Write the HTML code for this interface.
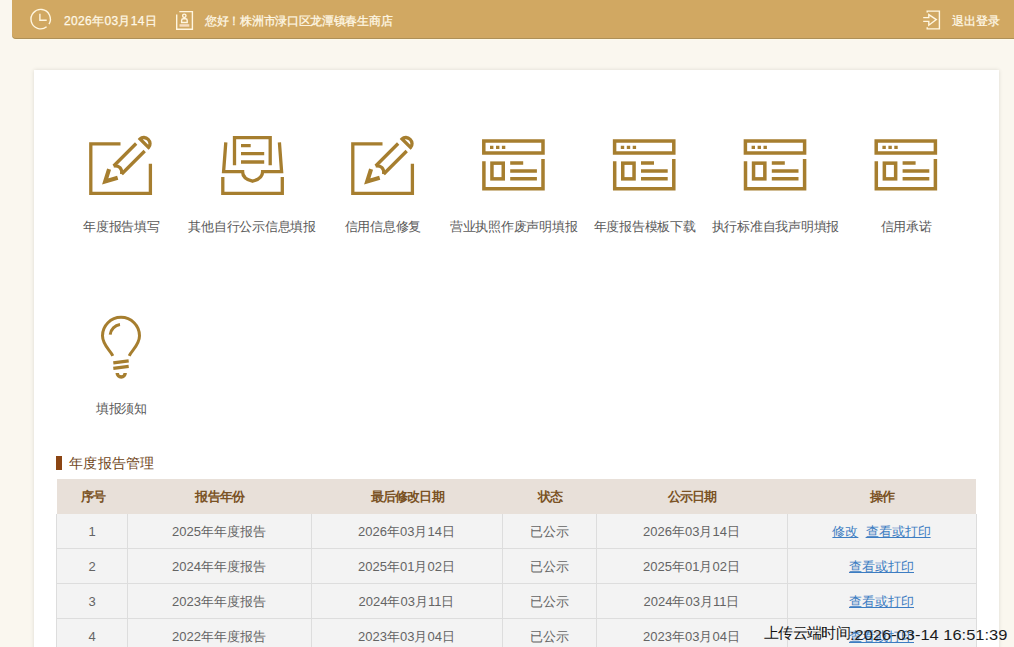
<!DOCTYPE html>
<html><head><meta charset="utf-8">
<style>
*{margin:0;padding:0;box-sizing:border-box}
html,body{width:1014px;height:647px;overflow:hidden;background:#faf7ef;font-family:"Liberation Sans",sans-serif;}
#hdr{position:absolute;left:12px;top:0;width:1002px;height:39px;background:#d1a862;border-radius:0 0 0 4px;box-shadow:inset 0 -1px 0 rgba(110,100,70,0.35),0 1px 0 #fffbea;}
.ht{position:absolute;color:#fff8e6;-webkit-text-stroke:0.25px #fff8e6;font-size:12px;line-height:14px;white-space:nowrap}
#panel{position:absolute;left:34px;top:70px;width:965px;height:600px;background:#fff;box-shadow:0 0 4px rgba(0,0,0,0.12);}
.lbl{position:absolute;color:#595959;font-size:13px;letter-spacing:-0.25px;line-height:16px;white-space:nowrap;text-align:center;width:160px}
#sect{position:absolute;left:56px;top:456px;width:6px;height:14px;background:#8b4513}
#secttxt{position:absolute;left:69px;letter-spacing:0.3px;top:455px;font-size:14px;line-height:17px;color:#6f4621;white-space:nowrap}
#thead{position:absolute;left:57px;top:479px;width:919px;height:35px;background:#e8e0d9}
.th{position:absolute;top:479px;height:35px;line-height:36px;color:#7a5224;font-weight:bold;font-size:13px;letter-spacing:-0.8px;padding-left:1.5px;text-align:center;white-space:nowrap}
#tbody{position:absolute;left:56px;top:514px;width:921px;height:140px;background:#f3f3f3}
.vl{position:absolute;top:514px;width:1px;height:140px;background:#dddddd}
.hl{position:absolute;left:56px;width:921px;height:1px;background:#dddddd}
.td{position:absolute;height:35px;line-height:35px;color:#646464;font-size:13px;text-align:center;white-space:nowrap}
.td a{color:#3d7dc2;text-decoration:underline}
#stamp1{position:absolute;left:764px;top:623px;font-size:15px;letter-spacing:-0.7px;line-height:20px;color:#111;white-space:nowrap}
#stamp2{position:absolute;left:850px;top:625px;font-size:14px;line-height:20px;color:#1c1c1c;white-space:nowrap;transform:scaleX(1.175);transform-origin:0 0}
</style></head><body>
<div id="hdr"></div>
<div class="ht" style="left:64px;top:14px;font-size:12px;letter-spacing:0.35px">2026年03月14日</div>
<div class="ht" style="left:205px;top:14px;letter-spacing:-0.3px">您好！株洲市渌口区龙潭镇春生商店</div>
<div class="ht" style="left:952px;top:14px">退出登录</div>
<div id="panel"></div>
<div class="lbl" style="left:41.3px;top:219px">年度报告填写</div>
<div class="lbl" style="left:172.1px;top:219px">其他自行公示信息填报</div>
<div class="lbl" style="left:302.9px;top:219px">信用信息修复</div>
<div class="lbl" style="left:433.7px;top:219px">营业执照作废声明填报</div>
<div class="lbl" style="left:564.5px;top:219px">年度报告模板下载</div>
<div class="lbl" style="left:695.3px;top:219px">执行标准自我声明填报</div>
<div class="lbl" style="left:826.1px;top:219px">信用承诺</div>
<div class="lbl" style="left:41.3px;top:401px">填报须知</div>
<div id="sect"></div>
<div id="secttxt">年度报告管理</div>
<div id="thead"></div>
<div id="tbody"></div>
<div class="th" style="left:57px;width:70px">序号</div>
<div class="th" style="left:127px;width:184px">报告年份</div>
<div class="th" style="left:311px;width:191px">最后修改日期</div>
<div class="th" style="left:502px;width:94px">状态</div>
<div class="th" style="left:596px;width:191px">公示日期</div>
<div class="th" style="left:787px;width:189px">操作</div>
<div class="vl" style="left:56px"></div>
<div class="vl" style="left:127px"></div>
<div class="vl" style="left:311px"></div>
<div class="vl" style="left:502px"></div>
<div class="vl" style="left:596px"></div>
<div class="vl" style="left:787px"></div>
<div class="vl" style="left:976px"></div>
<div class="hl" style="top:548px"></div>
<div class="hl" style="top:583px"></div>
<div class="hl" style="top:618px"></div>
<div class="td" style="left:57px;width:70px;top:514px">1</div>
<div class="td" style="left:127px;width:184px;top:514px">2025年年度报告</div>
<div class="td" style="left:311px;width:191px;top:514px">2026年03月14日</div>
<div class="td" style="left:502px;width:94px;top:514px">已公示</div>
<div class="td" style="left:596px;width:191px;top:514px">2026年03月14日</div>
<div class="td" style="left:787px;width:189px;top:514px"><a>修改</a>&nbsp;&nbsp;<a>查看或打印</a></div>
<div class="td" style="left:57px;width:70px;top:549px">2</div>
<div class="td" style="left:127px;width:184px;top:549px">2024年年度报告</div>
<div class="td" style="left:311px;width:191px;top:549px">2025年01月02日</div>
<div class="td" style="left:502px;width:94px;top:549px">已公示</div>
<div class="td" style="left:596px;width:191px;top:549px">2025年01月02日</div>
<div class="td" style="left:787px;width:189px;top:549px"><a>查看或打印</a></div>
<div class="td" style="left:57px;width:70px;top:584px">3</div>
<div class="td" style="left:127px;width:184px;top:584px">2023年年度报告</div>
<div class="td" style="left:311px;width:191px;top:584px">2024年03月11日</div>
<div class="td" style="left:502px;width:94px;top:584px">已公示</div>
<div class="td" style="left:596px;width:191px;top:584px">2024年03月11日</div>
<div class="td" style="left:787px;width:189px;top:584px"><a>查看或打印</a></div>
<div class="td" style="left:57px;width:70px;top:619px">4</div>
<div class="td" style="left:127px;width:184px;top:619px">2022年年度报告</div>
<div class="td" style="left:311px;width:191px;top:619px">2023年03月04日</div>
<div class="td" style="left:502px;width:94px;top:619px">已公示</div>
<div class="td" style="left:596px;width:191px;top:619px">2023年03月04日</div>
<div class="td" style="left:787px;width:189px;top:619px"><a>查看或打印</a></div>
<div id="stamp1">上传云端时间</div><div id="stamp2">:2026-03-14 16:51:39</div>
<svg width="1014" height="647" viewBox="0 0 1014 647" style="position:absolute;left:0;top:0" fill="none">
<g stroke="#fff6e0" stroke-width="1.4">
<path d="M46.6,26.8 A9.7,9.7 0 1 1 49.0,24.1"/>
<path d="M39.9,13.8 V20.3 H46.7"/>
<path d="M176.7,14.4 V29.3 H192.4 V11.6 H179.3"/>
<circle cx="184.3" cy="15.8" r="1.7"/>
<path d="M181.6,22.5 V20.5 Q181.6,18.8 183.4,18.8 H185.4 Q187.2,18.8 187.2,20.5 V22.5 Z"/>
<path d="M927.2,12.6 V11.1 H939.4 V28.9 H927.2 V27.3"/>
<path d="M923.2,17.6 H928.8 V14.6 L936.3,19.6 L928.8,25.2 V21.4 H923.2"/>
</g>
<rect x="179.5" y="24.2" width="9.8" height="2.5" fill="#f6dcc0"/>
<g stroke="#a67e2f" stroke-width="3.3" stroke-linecap="butt" stroke-linejoin="miter">
<g id="ic1">
<path d="M120.5,143.8 H90.8 V193.3 H150.4 V163.8"/>
<g transform="translate(102,184.7) rotate(-45)">
<path d="M16,-6 L4.5,0 L16,6.2" stroke-width="4.1"/>
<path d="M21.5,-5 Q28,0.7 21.5,6.4"/>
<path d="M21.5,-5 H53.3 M21.5,6.4 H54"/>
<path d="M59.2,-5.4 A5.5,6 0 0 1 59.2,6.6 Z"/>
</g>
</g>
<use href="#ic1" transform="translate(262,0)"/>
<path d="M234.5,165.2 V137.6 H270.2 V165.2"/>
<path d="M241,145.6 H250.7 M241,153.6 H264.2 M241,162 H264.2"/>
<path d="M225.8,142.4 L223.6,171.7 H242.6 C242.6,176.5 245.5,179.5 252.5,181.2 C259.5,179.5 262.6,176.5 262.6,171.7 H281.6 L279.4,142.4"/>
<path d="M222.8,177 V193.3 H282.3 V177"/>
<g id="ic4">
<g stroke-width="3.5">
<rect x="483.8" y="141" width="59.2" height="12" />
<path d="M483.9,161.2 V188.8 H543 V159"/>
<rect x="491.95" y="163.15" width="11.3" height="15.7"/>
<path d="M510.2,162.9 H523.2 M510.2,170.95 H536.9 M510.2,178.85 H536.9"/>
</g>
<path d="M490,147.4 h3.4 M496,147.4 h3.4 M501.9,147.4 h3.4" stroke-width="3.3"/>
</g>
<use href="#ic4" transform="translate(130.8,0)"/>
<use href="#ic4" transform="translate(261.6,0)"/>
<use href="#ic4" transform="translate(392.4,0)"/>
<path d="M112.8,355.8 C110,350 102.5,345 102.5,335.8 A18.5,18.5 0 0 1 139.5,335.8 C139.5,345 132,350 129.2,355.8" stroke-width="3"/>
<path d="M110.2,334.6 A11.3,11.3 0 0 1 120,324.6" stroke-width="3"/>
<path d="M113.3,362.9 L128.7,360.8 M113.3,368.3 L128.7,366.4" stroke-width="3.2"/>
<path d="M117.2,373 A4,4 0 0 0 125.2,373" stroke-width="3.4"/>
</g>
</svg>
</body></html>
